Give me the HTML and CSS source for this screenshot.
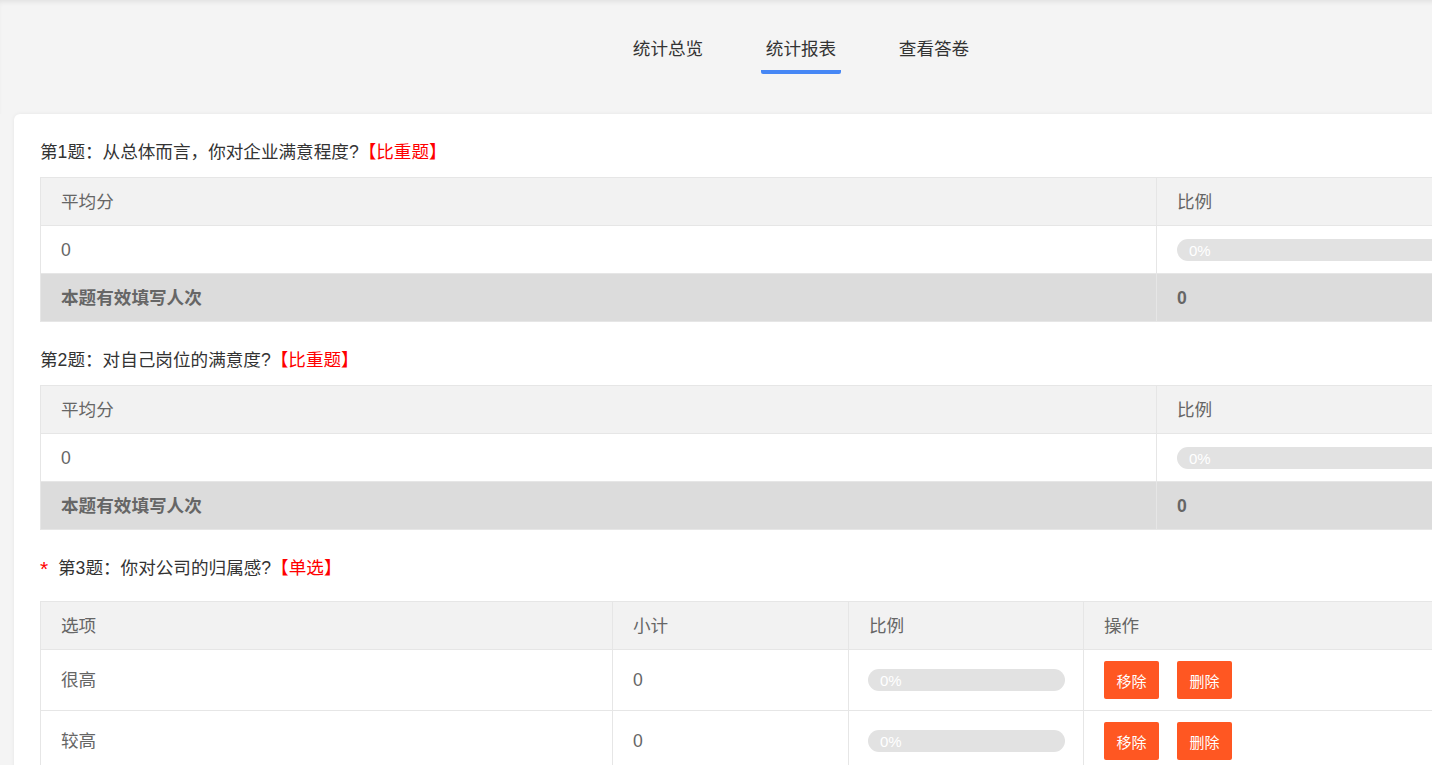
FILE: index.html
```html
<!DOCTYPE html>
<html lang="zh">
<head>
<meta charset="utf-8">
<title>统计报表</title>
<link rel="stylesheet" href="styles.css">
</head>
<body>
<div class="page">
  <header class="topbar">
    <nav class="tabs">
      <a class="tab">统计总览</a>
      <a class="tab active">统计报表</a>
      <a class="tab">查看答卷</a>
    </nav>
  </header>

  <main class="card">
    <section class="question">
      <h3 class="q-title">第1题：从总体而言，你对企业满意程度?<span class="q-type">【比重题】</span></h3>
      <table class="stat-table">
        <colgroup><col class="c-wide"><col></colgroup>
        <thead><tr><th>平均分</th><th>比例</th></tr></thead>
        <tbody>
          <tr><td>0</td><td><div class="bar"><span>0%</span></div></td></tr>
          <tr class="sum"><td>本题有效填写人次</td><td>0</td></tr>
        </tbody>
      </table>
    </section>

    <section class="question">
      <h3 class="q-title">第2题：对自己岗位的满意度?<span class="q-type">【比重题】</span></h3>
      <table class="stat-table">
        <colgroup><col class="c-wide"><col></colgroup>
        <thead><tr><th>平均分</th><th>比例</th></tr></thead>
        <tbody>
          <tr><td>0</td><td><div class="bar"><span>0%</span></div></td></tr>
          <tr class="sum"><td>本题有效填写人次</td><td>0</td></tr>
        </tbody>
      </table>
    </section>

    <section class="question">
      <h3 class="q-title q-required"><span class="star">*</span>第3题：你对公司的归属感?<span class="q-type">【单选】</span></h3>
      <table class="stat-table opt-table">
        <colgroup><col class="c-opt"><col class="c-cnt"><col class="c-pct"><col></colgroup>
        <thead><tr><th>选项</th><th>小计</th><th>比例</th><th>操作</th></tr></thead>
        <tbody>
          <tr>
            <td>很高</td><td>0</td>
            <td class="pct"><div class="bar"><span>0%</span></div></td>
            <td><div class="ops"><button class="btn">移除</button><button class="btn">删除</button></div></td>
          </tr>
          <tr>
            <td>较高</td><td>0</td>
            <td class="pct"><div class="bar"><span>0%</span></div></td>
            <td><div class="ops"><button class="btn">移除</button><button class="btn">删除</button></div></td>
          </tr>
        </tbody>
      </table>
    </section>
  </main>
</div>
</body>
</html>
```

FILE: styles.css
```css
html, body {
  margin: 0;
  padding: 0;
  overflow: hidden;
  background: #f4f4f4;
}
body {
  font-family: "Liberation Sans", "Noto Sans CJK SC", sans-serif;
  color: #333;
}
.page {
  width: 1602px;
}
.topbar {
  height: 114px;
  box-shadow: inset 0 4px 5px -2px rgba(0, 0, 0, 0.08);
}
.tabs {
  display: flex;
  justify-content: center;
  gap: 53px;
  padding-top: 36px;
}
.tab {
  display: block;
  width: 80px;
  text-align: center;
  font-size: 17.6px;
  line-height: 26px;
  color: #333;
  padding-bottom: 8px;
  border-bottom: 4px solid transparent;
  cursor: pointer;
}
.tab.active {
  border-bottom-color: #4687f5;
  border-radius: 0 0 2px 2px;
}
.card {
  margin-left: 14px;
  width: 1574px;
  background: #fff;
  border-radius: 6px;
  box-shadow: 0 0 4px rgba(0, 0, 0, 0.06);
  padding: 26px 26px 20px;
  box-sizing: border-box;
  min-height: 700px;
}
.q-title {
  margin: 0 0 13px;
  font-size: 17.6px;
  font-weight: normal;
  line-height: 24px;
  color: #333;
}
.question + .question .q-title {
  margin-top: 26px;
}
.q-required {
  margin-bottom: 21px !important;
}
.star {
  display: inline-block;
  width: 18px;
  color: #f00;
  font-size: 21px;
  line-height: 20px;
  vertical-align: -2px;
}
.q-type {
  color: #f00;
}
.stat-table {
  width: 100%;
  border-collapse: collapse;
  table-layout: fixed;
  font-size: 17.6px;
  line-height: 22px;
  color: #666;
}
.c-wide { width: 1116px; }
.c-opt { width: 572px; }
.c-cnt { width: 236px; }
.c-pct { width: 235px; }
.stat-table th,
.stat-table td {
  border: 1px solid #e6e6e6;
  text-align: left;
  padding: 0 20px;
  height: 47px;
  font-weight: normal;
}
.stat-table th {
  background: #f2f2f2;
}
.stat-table tr.sum td {
  background: #dcdcdc;
  font-weight: bold;
  border-color: #e6e6e6;
}
.opt-table tbody td {
  height: 60px;
}
.opt-table td.pct {
  padding: 0 18px 0 19px;
}
.bar {
  height: 22px;
  border-radius: 11px;
  background: #e2e2e2;
  color: #fff;
  font-size: 15px;
  line-height: 23px;
  padding-left: 12px;
}
.ops {
  display: flex;
  gap: 18px;
}
.btn {
  width: 55px;
  height: 38px;
  border: 0;
  border-radius: 2px;
  background: #ff5722;
  color: #fff;
  font-family: inherit;
  font-size: 15px;
  padding: 0;
  cursor: pointer;
}
```
